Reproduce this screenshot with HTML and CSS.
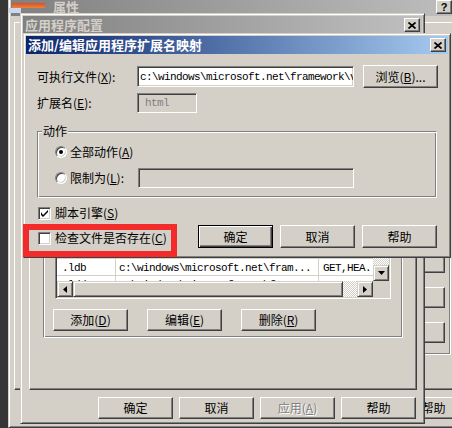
FILE: index.html
```html
<!DOCTYPE html>
<html lang="zh-CN">
<head>
<meta charset="utf-8">
<title>添加/编辑应用程序扩展名映射</title>
<link rel="stylesheet" href="styles.css">
</head>
<body>
<div class="desktop">

  <section class="win win-props">
    <header class="titlebar inactive">
      <span class="site-icon"><span class="site-icon-bar"></span><span class="site-icon-base"></span></span>
      <span class="title-text">属性</span>
      <span class="tb-buttons">
        <span class="tb-btn tb-help">?</span>
        <span class="tb-btn"><svg class="x-glyph" width="8" height="7" viewBox="0 0 8 7"><path d="M0.5 0.5L7.5 6.5M7.5 0.5L0.5 6.5" stroke="#000" stroke-width="1.7"/></svg></span>
      </span>
    </header>
    <div class="props-body">
      <div class="tabpage props-tab">
        <div class="group props-side">
          <button type="button" class="btn side-btn">添加</button>
          <button type="button" class="btn side-btn">编辑</button>
          <button type="button" class="btn side-btn">删除</button>
        </div>
      </div>
      <div class="dlg-buttons props-buttons">
        <button type="button" class="btn">确定</button>
        <button type="button" class="btn">取消</button>
        <button type="button" class="btn">应用(<u>A</u>)</button>
        <button type="button" class="btn">帮助</button>
      </div>
    </div>
  </section>

  <section class="win win-config">
    <header class="titlebar inactive">
      <span class="title-text">应用程序配置</span>
      <span class="tb-buttons">
        <span class="tb-btn"><svg class="x-glyph" width="8" height="7" viewBox="0 0 8 7"><path d="M0.5 0.5L7.5 6.5M7.5 0.5L0.5 6.5" stroke="#000" stroke-width="1.7"/></svg></span>
      </span>
    </header>
    <div class="config-body">
      <div class="tabpage config-tab">
        <div class="group map-group">
          <div class="listview">
            <div class="lv-top">
              <div class="lv-rows mono">
                <div class="lv-head"><span>扩展名</span><span>可执行路径</span><span>谓词</span></div>
                <div class="lv-row"><span>.asax</span><span>c:\windows\microsoft.net\fram...</span><span>GET,HEA..</span></div>
                <div class="lv-row"><span>.ascx</span><span>c:\windows\microsoft.net\fram...</span><span>GET,HEA..</span></div>
                <div class="lv-row"><span>.ashx</span><span>c:\windows\microsoft.net\fram...</span><span>GET,HEA..</span></div>
                <div class="lv-row"><span>.asmx</span><span>c:\windows\microsoft.net\fram...</span><span>GET,HEA..</span></div>
                <div class="lv-row"><span>.aspx</span><span>c:\windows\microsoft.net\fram...</span><span>GET,HEA..</span></div>
                <div class="lv-row"><span>.java</span><span>c:\windows\microsoft.net\fram...</span><span>GET,HEA..</span></div>
                <div class="lv-row"><span>.mdb</span><span>c:\windows\microsoft.net\fram...</span><span>GET,HEA..</span></div>
                <div class="lv-row"><span>.jsl</span><span>c:\windows\microsoft.net\fram...</span><span>GET,HEA..</span></div>
                <div class="lv-row"><span>.ldb</span><span>c:\windows\microsoft.net\fram...</span><span>GET,HEA..</span></div>
                <div class="lv-row"><span>.ldd</span><span>c:\windows\microsoft.net\fram...</span><span>GET,HEA..</span></div>
              </div>
              <div class="vscroll">
                <span class="vs-track"></span>
                <span class="sb-btn"><svg width="7" height="4" viewBox="0 0 7 4"><path d="M0 0h7L3.5 4z"/></svg></span>
              </div>
            </div>
            <div class="hscroll">
              <span class="sb-btn"><svg width="4" height="7" viewBox="0 0 4 7"><path d="M4 0v7L0 3.5z"/></svg></span>
              <span class="hs-thumb"></span>
              <span class="hs-track"></span>
              <span class="sb-btn"><svg width="4" height="7" viewBox="0 0 4 7"><path d="M0 0v7L4 3.5z"/></svg></span>
              <span class="sb-corner"></span>
            </div>
          </div>
          <div class="btn-row">
            <button type="button" class="btn">添加(<u>D</u>)</button>
            <button type="button" class="btn">编辑(<u>E</u>)</button>
            <button type="button" class="btn">删除(<u>R</u>)</button>
          </div>
        </div>
      </div>
      <div class="dlg-buttons">
        <button type="button" class="btn">确定</button>
        <button type="button" class="btn">取消</button>
        <button type="button" class="btn disabled">应用(<u>A</u>)</button>
        <button type="button" class="btn">帮助</button>
      </div>
    </div>
  </section>

  <section class="win win-edit">
    <header class="titlebar active">
      <span class="title-text">添加/编辑应用程序扩展名映射</span>
      <span class="tb-buttons">
        <span class="tb-btn"><svg class="x-glyph" width="8" height="7" viewBox="0 0 8 7"><path d="M0.5 0.5L7.5 6.5M7.5 0.5L0.5 6.5" stroke="#000" stroke-width="1.7"/></svg></span>
      </span>
    </header>
    <div class="edit-body">
      <div class="field-row row-exe">
        <label class="field-label">可执行文件(<u>X</u>):</label>
        <span class="textbox exe-box mono">c:\windows\microsoft.net\framework\v</span>
        <button type="button" class="btn browse-btn">浏览(<u>B</u>)...</button>
      </div>
      <div class="field-row row-ext">
        <label class="field-label">扩展名(<u>E</u>):</label>
        <span class="textbox ext-box disabled mono">html</span>
      </div>
      <div class="group verbs-group">
        <span class="group-legend">动作</span>
        <div class="opt-row">
          <span class="radio checked"></span><span class="opt-label">全部动作(<u>A</u>)</span>
        </div>
        <div class="opt-row limit-row">
          <span class="radio"></span><span class="opt-label limit-label">限制为(<u>L</u>):</span>
          <span class="textbox verbs-box disabled"></span>
        </div>
      </div>
      <div class="bottom-row">
        <div class="checks">
          <div class="opt-row">
            <span class="checkbox"><svg width="7" height="7" viewBox="0 0 7 7"><path d="M0 2v3l2 2 5-5V0L2 5z"/></svg></span>
            <span class="opt-label">脚本引擎(<u>S</u>)</span>
          </div>
          <div class="opt-row check-exists">
            <span class="checkbox"></span>
            <span class="opt-label">检查文件是否存在(<u>C</u>)</span>
          </div>
        </div>
        <div class="edit-buttons">
          <button type="button" class="btn default">确定</button>
          <button type="button" class="btn">取消</button>
          <button type="button" class="btn">帮助</button>
        </div>
      </div>
    </div>
  </section>

  <div class="highlight"></div>
</div>
</body>
</html>
```

FILE: styles.css
```css
* { box-sizing: border-box; }
html, body { margin: 0; padding: 0; }
body {
  width: 452px; height: 428px; overflow: hidden;
  background: #363636;
  font: 12px/16px "Noto Sans CJK SC", "Liberation Sans", sans-serif;
  color: #000;
}
u { text-decoration: underline; text-underline-offset: 1px; }
.mono { font-family: "Liberation Mono", "DejaVu Sans Mono", monospace; font-size: 11px; letter-spacing: -0.6px; }

.desktop { position: relative; width: 452px; height: 428px; overflow: hidden; }

/* windows */
.win {
  position: absolute;
  display: flex; flex-direction: column;
  background: #d4d0c8;
  border: 1px solid; border-color: #d4d0c8 #404040 #404040 #d4d0c8;
  box-shadow: inset 1px 1px #fff, inset -1px -1px #808080;
  padding: 2px;
}
.win-props { left: 8px; top: -5px; width: 467px; height: 433px; }
.win-config { left: 20px; top: 13px; width: 405px; height: 411px; }
.win-edit { left: 23px; top: 33px; width: 428px; height: 225px; }

.titlebar {
  flex: none; height: 18px;
  display: flex; align-items: center;
  padding: 0 2px 0 2px;
  font-weight: bold; font-size: 13px; line-height: 18px;
  white-space: nowrap;
}
.titlebar.active { background: linear-gradient(to right, #0a246a, #a6caf0); color: #fff; }
.titlebar.inactive { background: linear-gradient(to right, #808080, #c0c0c0); color: #d4d0c8; }
.tb-buttons { margin-left: auto; display: flex; gap: 2px; }
.tb-btn {
  width: 16px; height: 14px;
  display: flex; align-items: center; justify-content: center;
  background: #d4d0c8;
  border: 1px solid; border-color: #fff #404040 #404040 #fff;
  box-shadow: inset -1px -1px #808080;
  color: #000; font: bold 11px/12px "Liberation Sans", sans-serif;
}

/* props window (behind) */
.site-icon { display: flex; flex-direction: column; width: 33px; height: 12px; margin-left: -1px; margin-right: 8px; }
.site-icon-bar { height: 5px; background: linear-gradient(#d8502a, #f08038); margin-top: 2px; }
.site-icon-base { height: 5px; width: 12px; margin-left: -3px; background: #c8d8f0; }
.props-body { flex: 1; display: flex; flex-direction: column; padding: 6px 0 6px 3px; }
.props-tab {
  flex: 1; display: flex; flex-direction: column; justify-content: flex-end; align-items: flex-end;
  padding: 0 20px 34px 0;
}
.props-side { display: flex; flex-direction: column; gap: 14px; padding: 20px 5px 11px 20px; }
.props-side .btn { height: 21px; }
.props-buttons { margin: 7px 6px 0 0; }

/* common controls */
.tabpage {
  border: 1px solid; border-color: #fff #404040 #404040 #fff;
  box-shadow: inset -1px -1px #808080;
}
.group {
  border: 1px solid; border-color: #808080 #fff #fff #808080;
  box-shadow: inset 1px 1px #fff, inset -1px -1px #808080;
}
.btn {
  flex: none;
  width: 75px; height: 23px;
  padding: 0; margin: 0;
  background: #d4d0c8;
  border: 1px solid; border-color: #fff #404040 #404040 #fff;
  box-shadow: inset -1px -1px #808080;
  font: 12px/16px "Noto Sans CJK SC", "Liberation Sans", sans-serif; color: #000;
  display: flex; align-items: center; justify-content: center;
}
.btn.default {
  border-color: #000;
  box-shadow: inset 1px 1px #fff, inset -1px -1px #404040, inset -2px -2px #808080;
}
.btn.disabled { color: #808080; text-shadow: 1px 1px #fff; }

.textbox {
  flex: none;
  height: 21px;
  border: 1px solid; border-color: #808080 #fff #fff #808080;
  box-shadow: inset 1px 1px #404040, inset -1px -1px #d4d0c8;
  background: #fff;
  padding: 0 2px;
  display: flex; align-items: center;
  white-space: nowrap; overflow: hidden;
}
.textbox.disabled { background: #d4d0c8; color: #808080; }

.radio {
  flex: none; position: relative;
  width: 12px; height: 12px; border-radius: 50%;
  background: #fff;
  border: 1px solid; border-color: #808080 #fff #fff #808080;
  box-shadow: inset 1px 1px #404040, inset -1px -1px #d4d0c8;
}
.radio.checked::after {
  content: ""; position: absolute; left: 3px; top: 3px;
  width: 4px; height: 4px; border-radius: 50%; background: #000;
}
.checkbox {
  flex: none;
  width: 13px; height: 13px;
  background: #fff;
  border: 1px solid; border-color: #808080 #fff #fff #808080;
  box-shadow: inset 1px 1px #404040, inset -1px -1px #d4d0c8;
  display: flex; align-items: center; justify-content: center;
}
.opt-row { display: flex; align-items: center; height: 16px; }
.opt-label { margin-left: 3px; white-space: nowrap; }

/* config window */
.config-body { flex: 1; display: flex; flex-direction: column; padding: 32px 5px 2px 6px; }
.config-tab { flex: 1; }
.map-group { margin: 20px 13px 0; padding: 16px 11px 6px; display: flex; flex-direction: column; }
.listview {
  height: 195px;
  border: 1px solid; border-color: #808080 #fff #fff #808080;
  box-shadow: inset 1px 1px #404040, inset -1px -1px #d4d0c8;
  padding: 1px;
  background: #fff;
  display: flex; flex-direction: column;
}
.lv-top { flex: 1; display: flex; min-height: 0; }
.lv-rows { flex: 1; overflow: hidden; background: #fff; line-height: 16px; }
.lv-head, .lv-row { display: grid; grid-template-columns: 59px 203px 1fr; height: 17px; white-space: nowrap; }
.lv-head span {
  background: #d4d0c8; font-family: "Noto Sans CJK SC", sans-serif; font-size: 12px; letter-spacing: 0;
  border: 1px solid; border-color: #fff #404040 #404040 #fff; padding-left: 4px; overflow: hidden;
}
.lv-row { border-bottom: 1px solid #d4d0c8; }
.lv-row span { overflow: hidden; padding-top: 3px; line-height: 13px; }
.lv-row span:nth-child(1) { padding-left: 5px; border-right: 1px solid #d4d0c8; }
.lv-row span:nth-child(2) { padding-left: 3px; border-right: 1px solid #d4d0c8; }
.lv-row span:nth-child(3) { padding-left: 4px; }
.vscroll { width: 16px; display: flex; flex-direction: column; }
.vs-track { flex: 1; background: repeating-conic-gradient(#d4d0c8 0 25%, #fff 0 50%) 0 0 / 2px 2px; }
.sb-btn {
  flex: none; width: 16px; height: 16px;
  background: #d4d0c8;
  border: 1px solid; border-color: #d4d0c8 #404040 #404040 #d4d0c8;
  box-shadow: inset 1px 1px #fff, inset -1px -1px #808080;
  display: flex; align-items: center; justify-content: center;
}
.hscroll { flex: none; height: 16px; display: flex; }
.hs-thumb {
  flex: none; width: 270px; background: #d4d0c8;
  border: 1px solid; border-color: #d4d0c8 #404040 #404040 #d4d0c8;
  box-shadow: inset 1px 1px #fff, inset -1px -1px #808080;
}
.hs-track { flex: 1; background: repeating-conic-gradient(#d4d0c8 0 25%, #fff 0 50%) 0 0 / 2px 2px; }
.sb-corner { flex: none; width: 16px; background: #d4d0c8; }
.btn-row { display: flex; gap: 19px; margin: 10px 0 0 -2px; }
.btn-row .btn { height: 22px; }
.dlg-buttons { display: flex; justify-content: flex-end; gap: 6px; margin: 7px 1px 0 0; }
.dlg-buttons .btn { height: 22px; }

/* edit dialog */
.edit-body { flex: 1; display: flex; flex-direction: column; padding: 11px 11px 0 11px; }
.field-row { display: flex; align-items: center; }
.field-label { flex: none; width: 100px; white-space: nowrap; }
.row-exe { height: 23px; }
.exe-box { width: 217px; padding-left: 2px; }
.browse-btn { margin-left: 9px; }
.row-ext { height: 20px; margin-top: 5px; }
.ext-box { width: 60px; height: 20px; padding-left: 7px; }
.verbs-group { margin-top: 18px; height: 67px; padding: 0 0 0 17px; display: flex; flex-direction: column; }
.group-legend { align-self: flex-start; margin: -9px 0 0 -13px; padding: 0 1px; background: #d4d0c8; line-height: 16px; }
.verbs-group .opt-row:first-of-type { margin-top: 5px; }
.limit-row { height: 20px; margin-top: 8px; }
.limit-label { width: 68px; }
.verbs-box { width: 216px; height: 20px; }
.bottom-row { display: flex; justify-content: space-between; }
.checks { margin: 7px 0 0 1px; display: flex; flex-direction: column; gap: 9px; }
.checks .opt-label { margin-left: 4px; }
.edit-buttons { display: flex; gap: 7px; margin-top: 27px; }

/* annotation overlay */
.highlight {
  position: absolute; left: 23px; top: 224px; width: 154px; height: 33px;
  border: 6px solid #f32b2b;
}
```
